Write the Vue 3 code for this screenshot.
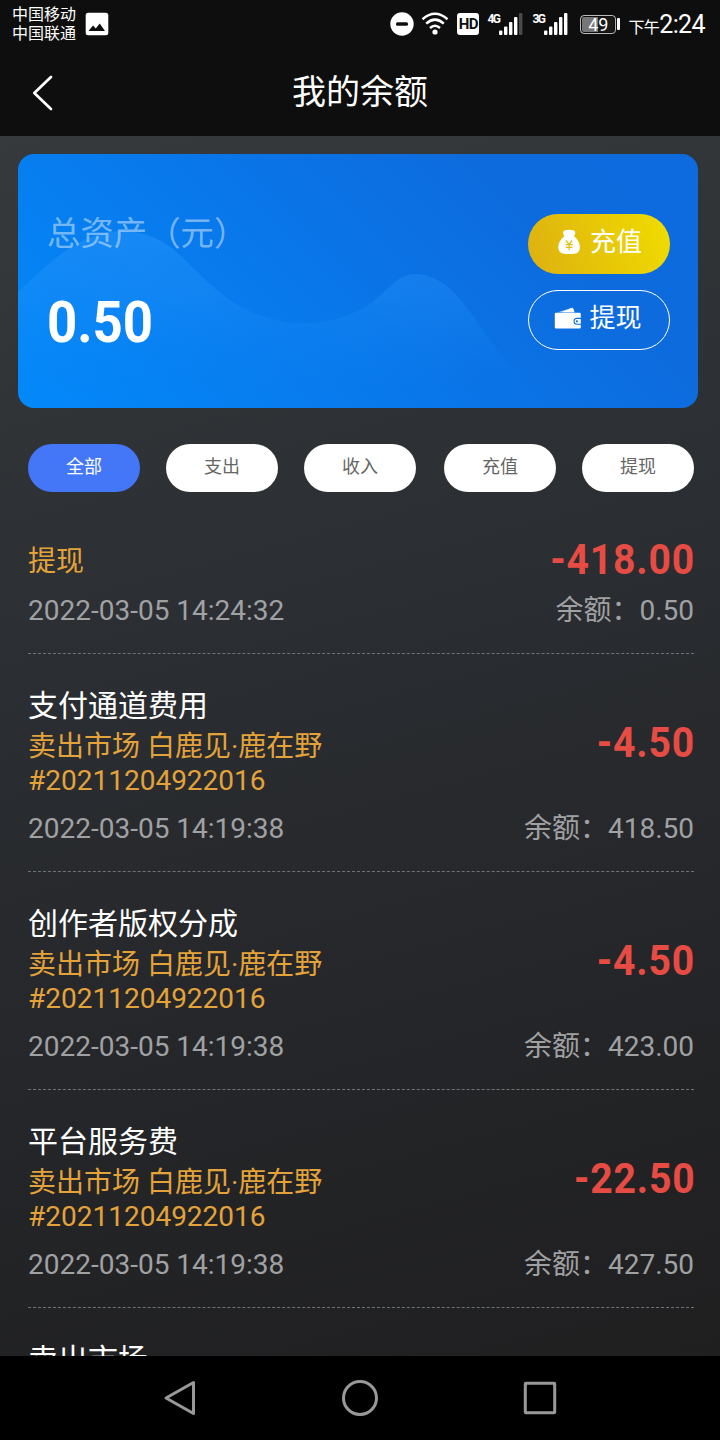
<template>
  <div class="page">
    <header class="status">
      <div class="carriers">
        <span>中国移动</span>
        <span>中国联通</span>
      </div>
      <svg class="photo" width="24" height="24" viewBox="0 0 24 24">
        <rect x="0.7" y="0.7" width="22.6" height="22.6" rx="2.5" fill="#fff" />
        <path d="M3.5 19 8 13.5l2.8 3 3.9-5L20 19z" fill="#0e0e0e" />
      </svg>
      <div class="status__icons">
        <svg class="dnd" width="24" height="24" viewBox="0 0 24 24">
          <circle cx="12" cy="12" r="11.7" fill="#fff" />
          <rect x="6" y="10.2" width="12" height="3.6" rx="1.5" fill="#0e0e0e" />
        </svg>
        <svg class="wifi" width="28" height="24" viewBox="0 0 28 24">
          <g fill="none" stroke="#fff" stroke-width="2.5">
            <path d="M1.5 7.2Q14-3.6 26.5 7.2" />
            <path d="M5.2 11.6Q14 3.6 22.8 11.6" />
            <path d="M9 16Q14 11.4 19 16" />
          </g>
          <circle cx="14" cy="20" r="2.6" fill="#fff" />
        </svg>
        <span class="hd">HD</span>
        <div v-for="s in signals" :key="s.net" class="signal" :class="'signal--' + s.net">
          <span class="signal__net">{{ s.net }}</span>
          <svg width="24" height="24" viewBox="0 0 24 24">
            <rect x="0" y="18.5" width="3.4" height="4.5" rx="1" fill="#fff" />
            <rect x="5" y="14.5" width="3.4" height="8.5" rx="1" fill="#fff" />
            <rect x="10" y="10" width="3.4" height="13" rx="1" fill="#fff" />
            <rect x="15" y="5" width="3.4" height="18" rx="1" fill="#fff" />
            <rect x="20" y="1" width="3.4" height="22" rx="1" :fill="s.full ? '#fff' : '#4a4a4a'" />
          </svg>
        </div>
        <div class="battery"><span>49</span></div>
        <span class="clock"><small>下午</small>2:24</span>
      </div>
    </header>

    <nav class="navbar">
      <svg class="navbar__back" width="24" height="38" viewBox="0 0 24 38">
        <path d="M21 4 4.300 20 21 36" fill="none" stroke="#fff" stroke-width="2.7" stroke-linecap="round" stroke-linejoin="round" />
      </svg>
      <h1 class="navbar__title">我的余额</h1>
    </nav>

    <main class="content">
      <section class="card">
        <svg class="card__wave" width="680" height="254" viewBox="0 0 680 254">
          <defs>
            <linearGradient id="wave" gradientUnits="userSpaceOnUse" x1="0" y1="77" x2="0" y2="235">
              <stop offset="0" stop-color="#36a0ff" stop-opacity="0.34" />
              <stop offset="0.4" stop-color="#2c9aff" stop-opacity="0.26" />
              <stop offset="1" stop-color="#108cff" stop-opacity="0" />
            </linearGradient>
          </defs>
          <path d="M0 138C40 100 65 78 105 77C155 79 165 110 205 141C250 175 300 176 340 157C368 143 376 120 397 120C430 120 449 154 475 190C493 216 511 241 535 254H0z" fill="url(#wave)" />
        </svg>
        <div class="card__info">
          <p class="card__label">总资产（元）</p>
          <p class="card__total">0.50</p>
        </div>
        <div class="card__actions">
          <button class="action action--gold">
            <svg width="26" height="26" viewBox="0 0 26 26">
              <path d="M8.200 1.500Q13 .2 18.200 1.500Q20.500 4 17.800 7.500H8.600Q5.800 4 8.200 1.500z" fill="#fff" />
              <path d="M8.800 7h8.800C21.200 9.600 24 13.700 23.800 18.600C23.600 23.400 21 25 16 25h-6C5 25 2.500 22.800 2.300 18.600C2.200 13.700 5.100 9.600 8.800 7z" fill="#fff" />
              <path d="M10 11.500l3.100 3.800 3.100-3.800M9.700 15.700h6.800M9.700 18.400h6.800M13.100 15.300v6" fill="none" stroke="#e5bf0c" stroke-width="1.200" />
            </svg>
            <span>充值</span>
          </button>
          <button class="action action--line">
            <svg width="28" height="26" viewBox="0 0 28 26">
              <path d="M4 7.200 18 2.700 20.300 7.200z" fill="#b9d8fb" />
              <path d="M8 7.200 18.300 2.700l1.300 1.300.9 3.200z" fill="#fff" />
              <path d="M2 7.800H25.500q1.300 0 1.300 1.300v3.700H23a3.500 3.500 0 0 0 0 7h3.800v2.500q0 1.300-1.300 1.300H2Q.8 23.600.8 22.300V9.100Q.8 7.800 2 7.800z" fill="#fff" />
              <path d="M22.900 13.900h3.900v4.800h-3.900a2.400 2.400 0 0 1 0-4.800z" fill="#fff" />
              <circle cx="22.900" cy="16.300" r="1.100" fill="#0d70e2" />
            </svg>
            <span>提现</span>
          </button>
        </div>
      </section>

      <div class="tabs">
        <button
          v-for="(tab, i) in tabs"
          :key="tab"
          class="tab"
          :class="{ 'is-active': active === i }"
          @click="active = i"
        >{{ tab }}</button>
      </div>

      <ul class="list">
        <li v-for="(r, i) in records" :key="i" class="record">
          <div class="record__top">
            <div class="record__text">
              <p v-if="r.title" class="record__title">{{ r.title }}</p>
              <p v-for="line in r.lines" :key="line" class="record__line">{{ line }}</p>
            </div>
            <p class="record__amount">{{ r.amount }}</p>
          </div>
          <div class="record__bottom">
            <span>{{ r.time }}</span>
            <span>余额：{{ r.balance }}</span>
          </div>
        </li>
        <li class="record">
          <p class="record__title">卖出市场</p>
        </li>
      </ul>
    </main>

    <footer class="keys">
      <svg width="40" height="40" viewBox="0 0 40 40">
        <path d="M33.500 4.500V35.500L6 20z" />
      </svg>
      <svg width="40" height="40" viewBox="0 0 40 40">
        <circle cx="20" cy="20" r="16.500" />
      </svg>
      <svg width="40" height="40" viewBox="0 0 40 40">
        <rect x="5.300" y="5.300" width="29.400" height="29.400" rx="0.500" />
      </svg>
    </footer>
  </div>
</template>

<script setup>
import { ref } from 'vue'

const active = ref(0)
const tabs = ['全部', '支出', '收入', '充值', '提现']
const signals = [
  { net: '4G', full: false },
  { net: '3G', full: true },
]
const sold = ['卖出市场 白鹿见·鹿在野', '#20211204922016']
const records = [
  { lines: ['提现'], amount: '-418.00', time: '2022-03-05 14:24:32', balance: '0.50' },
  { title: '支付通道费用', lines: sold, amount: '-4.50', time: '2022-03-05 14:19:38', balance: '418.50' },
  { title: '创作者版权分成', lines: sold, amount: '-4.50', time: '2022-03-05 14:19:38', balance: '423.00' },
  { title: '平台服务费', lines: sold, amount: '-22.50', time: '2022-03-05 14:19:38', balance: '427.50' },
]
</script>

<style>
body {
  background: #000;
}
</style>

<style scoped>
.page {
  display: flex;
  flex-direction: column;
  width: 720px;
  height: 1440px;
  overflow: hidden;
  font-family: Roboto, 'Noto Sans CJK SC', sans-serif;
  color: #fff;
}
p, h1, ul {
  margin: 0;
  padding: 0;
}
svg {
  display: block;
  flex-shrink: 0;
}
button {
  border: none;
  padding: 0;
  font-family: inherit;
  cursor: pointer;
}

/* status bar */
.status {
  display: flex;
  align-items: center;
  flex-shrink: 0;
  height: 48px;
  padding: 0 15px 0 12px;
  background: #0e0e0e;
}
.carriers {
  display: flex;
  flex-direction: column;
  font-size: 16px;
  line-height: 19px;
}
.photo {
  margin-left: 9px;
}
.status__icons {
  display: flex;
  align-items: center;
  margin-left: auto;
}
.wifi {
  margin-left: 7px;
}
.hd {
  width: 22px;
  height: 22px;
  margin-left: 8px;
  border-radius: 3px;
  background: #fff;
  color: #0e0e0e;
  font-size: 15px;
  font-weight: 700;
  line-height: 23px;
  letter-spacing: -0.5px;
  text-align: center;
}
.signal {
  display: flex;
  margin-left: 8px;
}
.signal__net {
  width: 12px;
  font-size: 12px;
  font-weight: 700;
  line-height: 14px;
  letter-spacing: -1.5px;
}
.signal--3G {
  margin-left: 9px;
}
.battery {
  position: relative;
  width: 34px;
  height: 17px;
  margin-left: 12px;
  border: 1px solid #bbb;
  border-radius: 4px;
  background: linear-gradient(90deg, #777 49%, #1a1a1a 49%);
  box-shadow: inset 0 0 0 1px #0e0e0e;
  font-size: 18px;
  line-height: 18px;
  text-align: center;
}
.battery::after {
  content: '';
  position: absolute;
  top: 2px;
  right: -5px;
  width: 3px;
  height: 12px;
  border-radius: 1px;
  background: #fff;
}
.clock {
  margin-left: 12px;
  padding-top: 3px;
  font-size: 25px;
  line-height: 45px;
  letter-spacing: -0.6px;
  white-space: nowrap;
}
.clock small {
  font-size: 16px;
}

/* title bar */
.navbar {
  display: flex;
  align-items: center;
  flex-shrink: 0;
  height: 88px;
  padding: 0 30px;
  background: #0e0e0e;
}
.navbar__title {
  flex: 1;
  padding: 1px 24px 0 0;
  font-size: 34px;
  font-weight: 400;
  line-height: 87px;
  text-align: center;
}

.content {
  flex: 1;
  min-height: 0;
  overflow: hidden;
  padding: 18px 22px 0 18px;
  background: linear-gradient(165deg, #363a3c 0%, #2a2d31 42%, #252629 70%, #1f1f20 100%);
}

/* balance card */
.card {
  position: relative;
  display: flex;
  justify-content: space-between;
  height: 254px;
  border-radius: 16px;
  overflow: hidden;
  background: linear-gradient(45deg, #0389fa 0%, #0a74e7 52%, #0d6bdd 75%, #0d6bdf 100%);
}
.card__wave {
  position: absolute;
  left: 0;
  top: 0;
}
.card__info {
  position: relative;
  padding: 58px 0 0 29px;
}
.card__label {
  font-size: 33.4px;
  line-height: 44px;
  color: rgba(255, 255, 255, 0.46);
}
.card__total {
  margin-top: 32px;
  font-size: 58px;
  font-weight: 700;
  line-height: 68px;
  transform: scaleX(0.91);
  transform-origin: left;
}
.card__actions {
  position: relative;
  display: flex;
  flex-direction: column;
  gap: 16px;
  padding: 60px 28px 0 0;
}
.action {
  display: flex;
  align-items: center;
  justify-content: center;
  gap: 8px;
  width: 142px;
  height: 60px;
  box-sizing: border-box;
  border-radius: 30px;
  color: #fff;
  font-size: 26px;
}
.action span {
  line-height: 40px;
  margin-bottom: 5px;
}
.action svg {
  margin-bottom: 4px;
}
.action--gold {
  background: linear-gradient(70deg, #ddb010, #f0dd00);
}
.action--line {
  gap: 7px;
  padding-right: 2px;
  border: 1px solid #fff;
  background: none;
}

/* filter pills */
.tabs {
  display: flex;
  gap: 26px;
  padding: 36px 4px 0 10px;
}
.tab {
  width: 112px;
  height: 48px;
  padding-bottom: 7px;
  border-radius: 24px;
  background: #fff;
  color: #666;
  font-size: 18px;
}
.tab:nth-child(3) {
  margin-right: 2px;
}
.tab.is-active {
  background: #4476f8;
  color: #fff;
}

/* records */
.list {
  padding: 17px 4px 0 10px;
  list-style: none;
}
.record {
  padding: 35px 0 25px;
  border-bottom: 1px dashed #707375;
}
.record__top {
  display: flex;
  align-items: center;
  justify-content: space-between;
}
.record__title {
  margin-bottom: 7px;
  font-size: 30px;
  line-height: 34px;
}
.record__line {
  font-size: 28px;
  line-height: 34px;
  color: #e3a33a;
}
.record__amount {
  margin-right: -1px;
  font-size: 43px;
  font-weight: 700;
  line-height: 34px;
  letter-spacing: 0.9px;
  color: #e64c43;
  transform: translateY(-2px) scaleX(0.91);
  transform-origin: right;
}
.record__bottom {
  display: flex;
  justify-content: space-between;
  margin-top: 14px;
  font-size: 28px;
  line-height: 34px;
  color: #a0a1a3;
}
.record:first-child .record__line {
  padding-top: 1px;
  line-height: 33px;
}
.record:first-child .record__bottom {
  margin-top: 16px;
}

/* system keys */
.keys {
  display: flex;
  align-items: center;
  justify-content: center;
  gap: 140px;
  flex-shrink: 0;
  height: 84px;
  background: #000;
}
.keys svg {
  fill: none;
  stroke: #999;
  stroke-width: 3;
  stroke-linejoin: round;
}
</style>
